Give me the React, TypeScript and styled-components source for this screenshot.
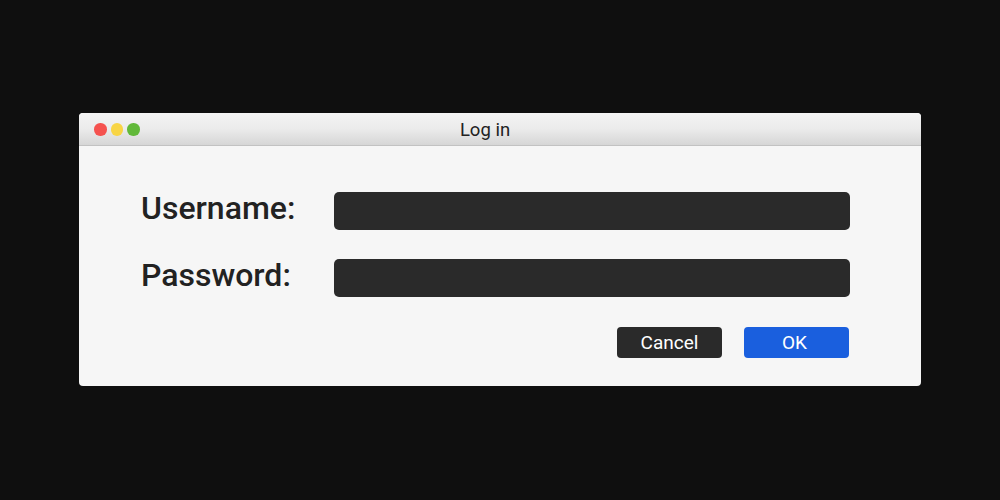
import React from "react";
import styled, { createGlobalStyle } from "styled-components";

const Global = createGlobalStyle`
  html, body { margin: 0; padding: 0; background: #0f0f0f; }
  body { font-family: Roboto, "Noto Sans", "Liberation Sans", sans-serif; }
`;

const Page = styled.div`
  width: 1000px;
  height: 500px;
  display: flex;
  align-items: flex-start;
  justify-content: center;
  padding-top: 113px;
  box-sizing: border-box;
`;

const Window = styled.div`
  width: 842px;
  background: #f6f6f6;
  border-radius: 4px;
  overflow: hidden;
`;

const TitleBar = styled.div`
  position: relative;
  height: 32px;
  display: flex;
  align-items: center;
  justify-content: center;
  background: linear-gradient(#f4f4f4, #ebebeb 50%, #d6d6d6);
  border-bottom: 1px solid #c2c2c2;
`;

const Lights = styled.div`
  position: absolute;
  left: 15px;
  top: 10px;
  display: flex;
  gap: 4px;
`;

const Light = styled.span<{ $c: string }>`
  width: 12.5px;
  height: 12.5px;
  border-radius: 50%;
  background: ${(p) => p.$c};
`;

const Title = styled.div`
  font-size: 18.5px;
  color: #222;
  margin-right: 30px;
  margin-top: 1px;
`;

const Body = styled.div`
  padding: 46px 71px 28px 62px;
  display: flex;
  flex-direction: column;
`;

const Form = styled.div`
  display: grid;
  grid-template-columns: 193px 1fr;
  row-gap: 29px;
  align-items: center;
`;

const Label = styled.label`
  font-size: 32px;
  line-height: 30px;
  font-weight: 500;
  color: #222;
  margin-bottom: 6px;
`;

const Field = styled.div`
  height: 38px;
  background: #2a2a2a;
  border-radius: 5px;
`;

const Actions = styled.div`
  display: flex;
  justify-content: flex-end;
  gap: 22px;
  margin-top: 30px;
  margin-right: 1px;
`;

const Button = styled.button<{ $primary?: boolean }>`
  width: 105px;
  height: 31px;
  border: none;
  border-radius: 4px;
  background: ${(p) => (p.$primary ? "#1a5fde" : "#2a2a2a")};
  color: #fff;
  font-family: Roboto, "Noto Sans", sans-serif;
  font-size: 19px;
  padding: 0 ${(p) => (p.$primary ? "4px" : "0")} 0 0;
`;

export default function App() {
  return (
    <>
      <Global />
      <Page>
        <Window>
          <TitleBar>
            <Lights>
              <Light $c="#f5524f" />
              <Light $c="#f8d545" />
              <Light $c="#62b93a" />
            </Lights>
            <Title>Log in</Title>
          </TitleBar>
          <Body>
            <Form>
              <Label>Username:</Label>
              <Field />
              <Label>Password:</Label>
              <Field />
            </Form>
            <Actions>
              <Button>Cancel</Button>
              <Button $primary>OK</Button>
            </Actions>
          </Body>
        </Window>
      </Page>
    </>
  );
}
